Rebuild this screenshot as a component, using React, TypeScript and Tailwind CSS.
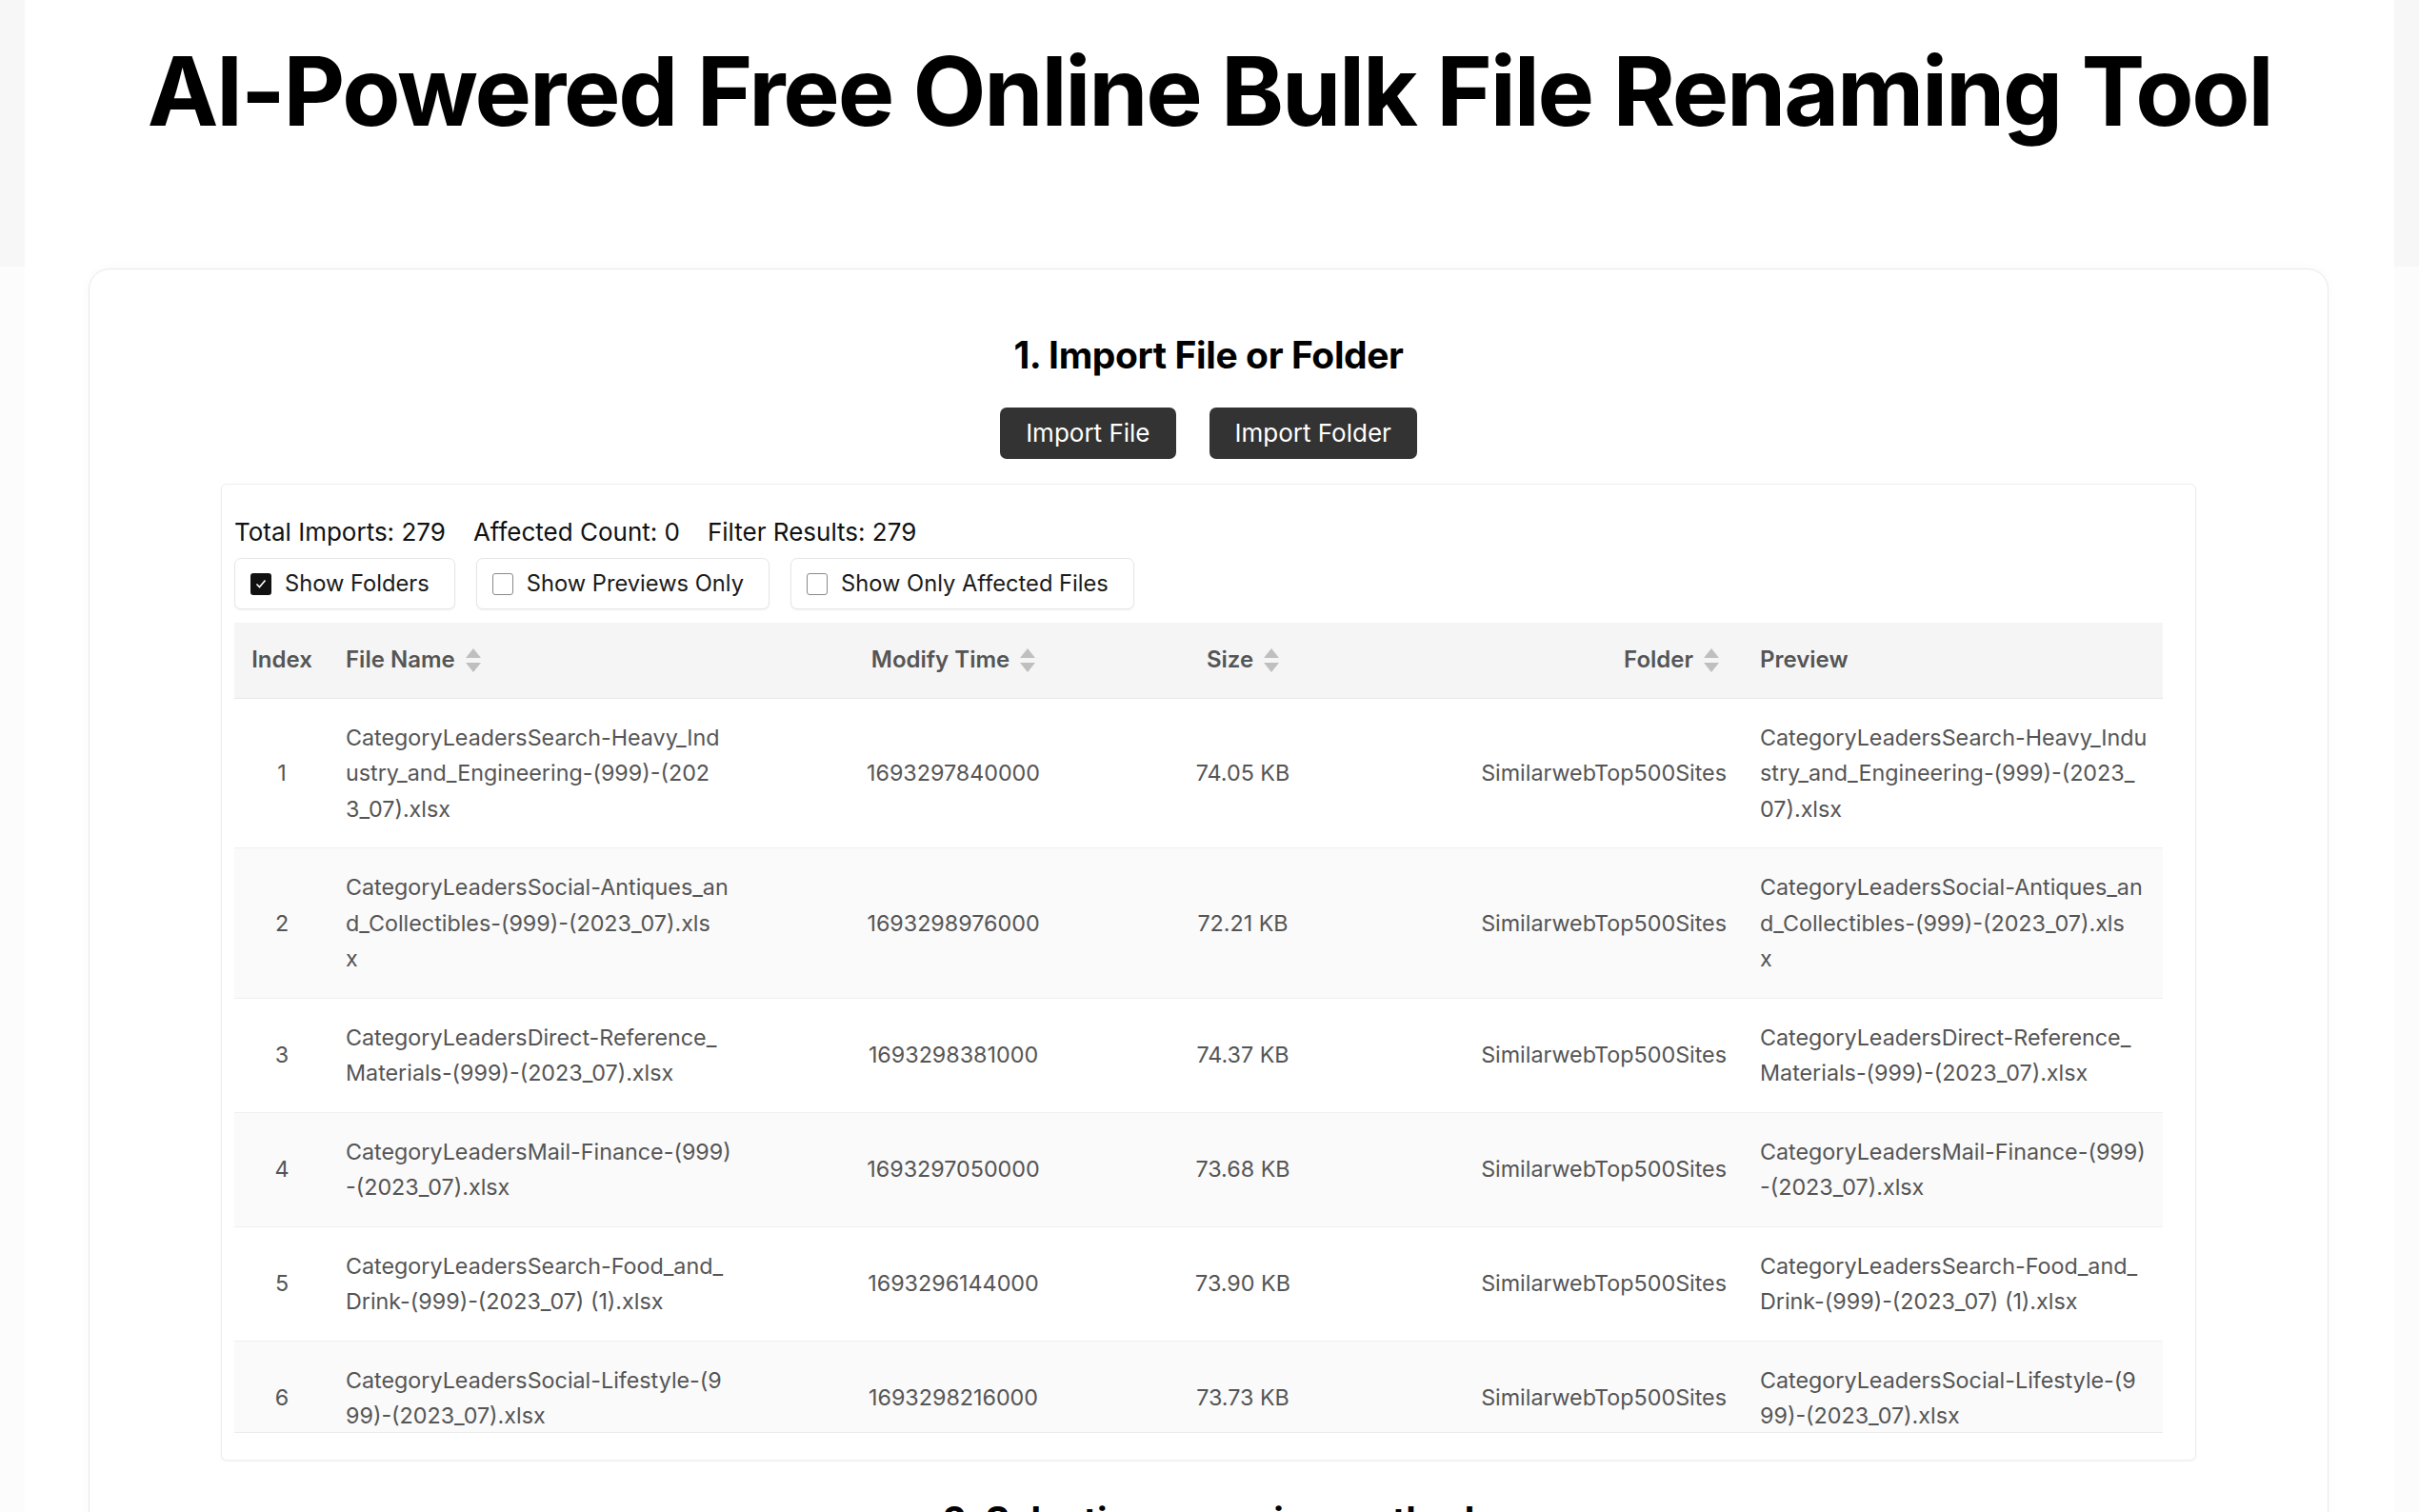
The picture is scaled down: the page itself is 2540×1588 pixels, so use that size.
import React from "react";

type Row = {
  idx: number;
  name: string[];
  time: string;
  size: string;
  folder: string;
  preview: string[];
};

const rows: Row[] = [
  {
    idx: 1,
    name: ["CategoryLeadersSearch-Heavy_Ind", "ustry_and_Engineering-(999)-(202", "3_07).xlsx"],
    time: "1693297840000",
    size: "74.05 KB",
    folder: "SimilarwebTop500Sites",
    preview: ["CategoryLeadersSearch-Heavy_Indu", "stry_and_Engineering-(999)-(2023_", "07).xlsx"],
  },
  {
    idx: 2,
    name: ["CategoryLeadersSocial-Antiques_an", "d_Collectibles-(999)-(2023_07).xls", "x"],
    time: "1693298976000",
    size: "72.21 KB",
    folder: "SimilarwebTop500Sites",
    preview: ["CategoryLeadersSocial-Antiques_an", "d_Collectibles-(999)-(2023_07).xls", "x"],
  },
  {
    idx: 3,
    name: ["CategoryLeadersDirect-Reference_", "Materials-(999)-(2023_07).xlsx"],
    time: "1693298381000",
    size: "74.37 KB",
    folder: "SimilarwebTop500Sites",
    preview: ["CategoryLeadersDirect-Reference_", "Materials-(999)-(2023_07).xlsx"],
  },
  {
    idx: 4,
    name: ["CategoryLeadersMail-Finance-(999)", "-(2023_07).xlsx"],
    time: "1693297050000",
    size: "73.68 KB",
    folder: "SimilarwebTop500Sites",
    preview: ["CategoryLeadersMail-Finance-(999)", "-(2023_07).xlsx"],
  },
  {
    idx: 5,
    name: ["CategoryLeadersSearch-Food_and_", "Drink-(999)-(2023_07) (1).xlsx"],
    time: "1693296144000",
    size: "73.90 KB",
    folder: "SimilarwebTop500Sites",
    preview: ["CategoryLeadersSearch-Food_and_", "Drink-(999)-(2023_07) (1).xlsx"],
  },
  {
    idx: 6,
    name: ["CategoryLeadersSocial-Lifestyle-(9", "99)-(2023_07).xlsx"],
    time: "1693298216000",
    size: "73.73 KB",
    folder: "SimilarwebTop500Sites",
    preview: ["CategoryLeadersSocial-Lifestyle-(9", "99)-(2023_07).xlsx"],
  },
];

function SortIcon() {
  return (
    <span className="inline-flex flex-col items-center gap-[5px] ml-[11px]">
      <svg width="16" height="10" viewBox="0 0 16 10">
        <polygon points="8,0 16,10 0,10" fill="#bfbfbf" />
      </svg>
      <svg width="16" height="10" viewBox="0 0 16 10">
        <polygon points="0,0 16,0 8,10" fill="#bfbfbf" />
      </svg>
    </span>
  );
}

function Check({ checked, label }: { checked: boolean; label: string }) {
  return (
    <label className="flex items-center h-[54px] pl-[16px] pr-[26px] border border-[#e6e6e6] rounded-[7px] bg-white shadow-[0_1px_2px_rgba(0,0,0,0.06)]">
      {checked ? (
        <span className="w-[22px] h-[23px] rounded-[3px] bg-[#111111] flex items-center justify-center">
          <svg width="14" height="14" viewBox="0 0 14 14">
            <polyline points="2.5,7.5 5.5,10.5 11.5,3.5" fill="none" stroke="#ffffff" strokeWidth="1.6" />
          </svg>
        </span>
      ) : (
        <span className="w-[22px] h-[23px] rounded-[3px] border-[1.5px] border-[#8a8a8a] bg-white" />
      )}
      <span className="ml-[14px] text-[23.7px] text-[#1a1a1a] leading-none">{label}</span>
    </label>
  );
}

function Lines({ lines }: { lines: string[] }) {
  return (
    <>
      {lines.map((l, i) => (
        <div key={i} className="whitespace-pre">
          {l}
        </div>
      ))}
    </>
  );
}

export default function App() {
  return (
    <div className="min-h-[1588px] bg-[linear-gradient(#f7f7f7_0px,#f7f7f7_280px,#fcfcfc_280px)] [font-family:Inter,'Liberation_Sans',sans-serif]">
      <div className="mx-[26px] bg-white min-h-[1588px] pt-[36px] overflow-hidden">
        <h1 className="text-center text-[100px] leading-[120px] font-bold tracking-[-0.022em] text-black">
          AI-Powered Free Online Bulk File Renaming Tool
        </h1>

        <div className="ml-[67px] mr-[69px] mt-[126px] border border-[#e9e9e9] rounded-[22px] bg-white shadow-[0_0_12px_rgba(0,0,0,0.03)] px-[138px] pt-[66px] pb-[40px]">
          <h2 className="text-center text-[39px] leading-[48px] font-bold tracking-[-0.01em] text-black">
            1. Import File or Folder
          </h2>
          <div className="flex justify-center gap-[35px] mt-[31px]">
            <button className="h-[54px] px-[27px] rounded-[7px] bg-[#333333] text-white text-[26px] leading-none">
              Import File
            </button>
            <button className="h-[54px] px-[27px] rounded-[7px] bg-[#333333] text-white text-[26px] leading-none">
              Import Folder
            </button>
          </div>

          <div className="mt-[26px] border border-[#eeeeee] rounded-[6px] bg-white shadow-[0_1px_3px_rgba(0,0,0,0.05)] pl-[13px] pt-[32px] pb-[28px]">
            <div className="flex gap-[29px] text-[26px] leading-[36px] text-[#111111]">
              <span>Total Imports: 279</span>
              <span>Affected Count: 0</span>
              <span>Filter Results: 279</span>
            </div>
            <div className="flex gap-[22px] mt-[9px]">
              <Check checked label="Show Folders" />
              <Check checked={false} label="Show Previews Only" />
              <Check checked={false} label="Show Only Affected Files" />
            </div>

            <div className="mt-[14px] w-[2025px] h-[851px] overflow-hidden border-b border-[#ececec]">
              <table className="w-[2025px] table-fixed border-collapse">
                <colgroup>
                  <col className="w-[100px]" />
                  <col className="w-[502px]" />
                  <col className="w-[306px]" />
                  <col className="w-[302px]" />
                  <col className="w-[374px]" />
                  <col className="w-[441px]" />
                </colgroup>
                <thead>
                  <tr className="h-[79px] bg-[#f5f5f6] border-b border-[#e8e8e8] text-[24px] font-semibold text-[#555555]">
                    <th className="text-center font-semibold">Index</th>
                    <th className="text-left pl-[17px] font-semibold">
                      <span className="inline-flex items-center">
                        File Name
                        <SortIcon />
                      </span>
                    </th>
                    <th className="text-center font-semibold">
                      <span className="inline-flex items-center">
                        Modify Time
                        <SortIcon />
                      </span>
                    </th>
                    <th className="text-center font-semibold">
                      <span className="inline-flex items-center">
                        Size
                        <SortIcon />
                      </span>
                    </th>
                    <th className="text-right pr-[25px] font-semibold">
                      <span className="inline-flex items-center">
                        Folder
                        <SortIcon />
                      </span>
                    </th>
                    <th className="text-left pl-[18px] font-semibold">Preview</th>
                  </tr>
                </thead>
                <tbody>
                  {rows.map((r) => (
                    <tr
                      key={r.idx}
                      className={
                        (r.idx % 2 === 0 ? "bg-[#fafafa] " : "bg-white ") +
                        "border-b border-[#efefef] text-[23.3px] leading-[37.5px] text-[#555555]"
                      }
                    >
                      <td className="text-center py-[22px] align-middle">{r.idx}</td>
                      <td className="pl-[17px] py-[22px] align-middle">
                        <Lines lines={r.name} />
                      </td>
                      <td className="text-center py-[22px] align-middle">{r.time}</td>
                      <td className="text-center py-[22px] align-middle">{r.size}</td>
                      <td className="text-right pr-[17px] py-[22px] align-middle">{r.folder}</td>
                      <td className="pl-[18px] py-[22px] align-middle">
                        <Lines lines={r.preview} />
                      </td>
                    </tr>
                  ))}
                </tbody>
              </table>
            </div>
          </div>

          <h2 className="mt-[39px] text-center text-[39px] leading-[48px] font-bold tracking-[-0.01em] text-black">
            2. Selection renaming method
          </h2>
        </div>
      </div>
    </div>
  );
}
